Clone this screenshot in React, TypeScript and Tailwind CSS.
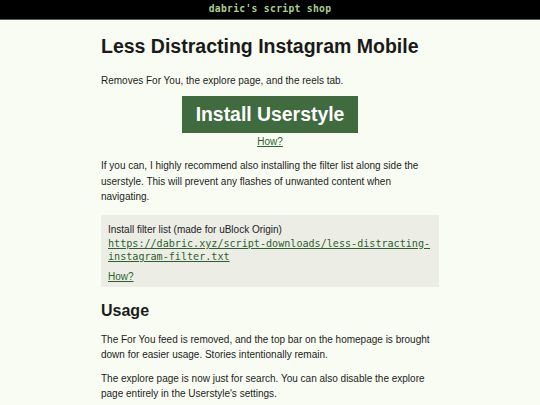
import React from 'react';

const sans = "font-['Liberation_Sans',Arial,sans-serif]";
const mono = "font-['DejaVu_Sans_Mono','Liberation_Mono',monospace]";

export default function App() {
  return (
    <div className={`min-h-screen bg-[#f9fcf2] text-[#1c1c1c] ${sans}`}>
      <header className="h-5 bg-black border-b border-[#5a5a5a] flex items-center justify-center">
        <span className={`${mono} text-[9.7px] font-bold tracking-[0.3px] text-[#a9cf90]`}>dabric's script shop</span>
      </header>

      <main className="max-w-[338px] mx-auto pt-[13px] text-[10px] leading-[15.5px]">
        <h1 className="text-[19.5px] leading-[26px] font-bold text-[#1a1a1a]">Less Distracting Instagram Mobile</h1>
        <p className="mt-[14px]">Removes For You, the explore page, and the reels tab.</p>

        <div className="mt-[7px] flex flex-col items-center">
          <a href="#" className="bg-[#3f6b3e] text-white font-bold text-[19.4px] leading-[37px] w-[176px] text-center">
            Install Userstyle
          </a>
          <a href="#" className="mt-[1px] underline text-[#2f5e30]">How?</a>
        </div>

        <p className="mt-[9px]">
          If you can, I highly recommend also installing the filter list along side the userstyle. This will prevent any flashes of unwanted content when navigating.
        </p>

        <div className="mt-[10px] bg-[#eceee6] px-[7px] pt-[7px] pb-[2px]">
          <div>Install filter list (made for uBlock Origin)</div>
          <a href="#" className={`${mono} block text-[10.1px] leading-[13px] underline text-[#2f5e30] break-all`}>
            https://dabric.xyz/script-downloads/less-distracting-instagram-filter.txt
          </a>
          <a href="#" className="block mt-[6px] underline text-[#2f5e30] w-fit">How?</a>
        </div>

        <h2 className="mt-[14px] text-[16px] leading-[20px] font-bold">Usage</h2>
        <p className="mt-[11px]">
          The For You feed is removed, and the top bar on the homepage is brought down for easier usage. Stories intentionally remain.
        </p>
        <p className="mt-[8px]">
          The explore page is now just for search. You can also disable the explore page entirely in the Userstyle's settings.
        </p>
      </main>
    </div>
  );
}
